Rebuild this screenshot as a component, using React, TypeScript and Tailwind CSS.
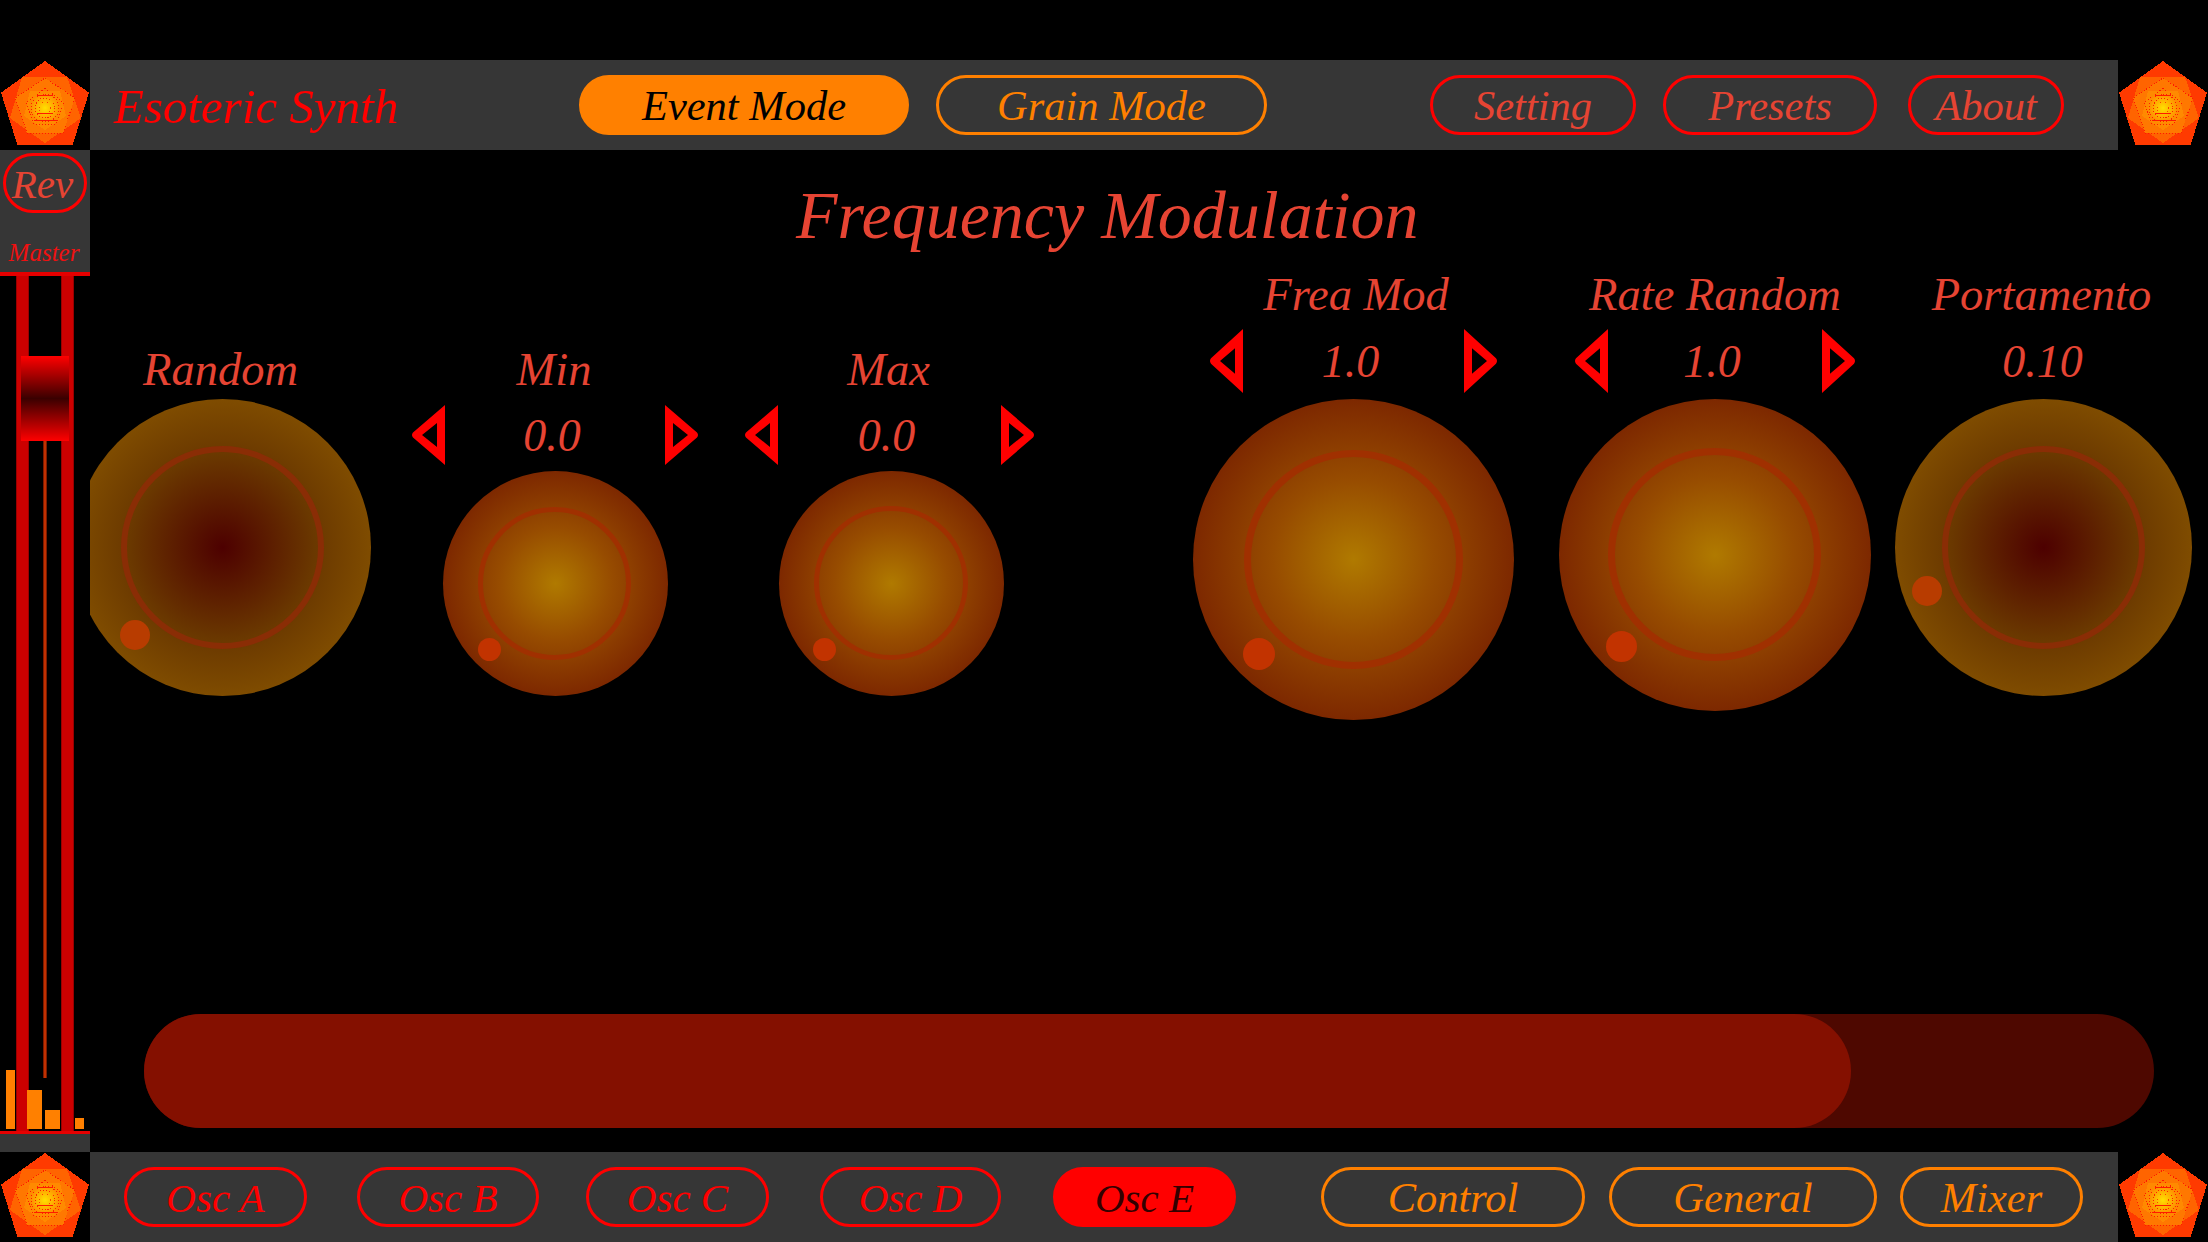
import { clsx } from "clsx";

function Logo() {
  return (
    <div className="w-[90px] h-[90px] shrink-0 bg-black">
      <svg viewBox="0 0 90 90" className="w-full h-full" shapeRendering="crispEdges">
        <defs>
          <radialGradient id="logoCore">
            <stop offset="0%" stopColor="#ffe000" />
            <stop offset="55%" stopColor="#ffb000" />
            <stop offset="100%" stopColor="#ff8a00" />
          </radialGradient>
        </defs>
        <polygon points="45,1 89,32.7 72.7,84.7 17.3,84.7 1,32.7" fill="#ff3a00" />
        <polygon points="22,17 67,17 81,58 45,83 10,58" fill="#ff6400" />
        <polygon points="45,18 75,38 63,73 27,73 15,38" fill="#ff7800" stroke="#ff1a00" strokeWidth="1" strokeDasharray="1 2" />
        <polygon points="30,31 60,31 66,56 45,70 24,56" fill="#ff8a00" />
        <polygon points="45,28 64,43 56,64 34,64 26,43" fill="none" stroke="#ff1a00" strokeWidth="1" strokeDasharray="1 2" />
        <circle cx="45" cy="48" r="15" fill="url(#logoCore)" />
        <circle cx="45" cy="48" r="14" fill="none" stroke="#ff2000" strokeWidth="1" strokeDasharray="1 2" />
        <circle cx="45" cy="48" r="10" fill="none" stroke="#ff2000" strokeWidth="1" strokeDasharray="1 2" />
        <circle cx="45" cy="48" r="6" fill="none" stroke="#ff4000" strokeWidth="1" strokeDasharray="1 2" />
        <rect x="37" y="35" width="16" height="1" fill="#ff1a00" />
        <rect x="37" y="53" width="16" height="1" fill="#ff1a00" />
        <rect x="34" y="60" width="23" height="1" fill="#ff1a00" />
      </svg>
    </div>
  );
}

type PillProps = {
  label: string;
  width: string;
  tone: "red" | "redSoft" | "orange" | "redOn" | "orangeOn";
  textSize?: string;
  className?: string;
};

const toneClass = {
  red: "border-[#ff0000] text-[#ff0000]",
  redSoft: "border-[#ff0000] text-[#e64433]",
  orange: "border-[#ff8000] text-[#ff8000]",
  redOn: "border-[#ff0000] bg-[#ff0000] text-[#330000]",
  orangeOn: "border-[#ff8000] bg-[#ff8000] text-black",
};

function Pill({ label, width, tone, textSize = "text-[42.5px]", className }: PillProps) {
  return (
    <button
      className={clsx(
        "h-[60px] shrink-0 pt-[2px] rounded-[30px] border-[3px] flex items-center justify-center leading-none",
        width,
        textSize,
        toneClass[tone],
        className,
      )}
    >
      {label}
    </button>
  );
}

function Arrow({ right, tall }: { right?: boolean; tall?: boolean }) {
  return (
    <svg
      viewBox="0 0 34 60"
      preserveAspectRatio="none"
      className={clsx("w-[34px] shrink-0", tall ? "h-[64px]" : "h-[60px]", right && "-scale-x-100")}
    >
      <path d="M34 0V60L2 32.5Q0 30 2 27.5ZM26 18L11 30L26 42Z" fill="#ff0000" fillRule="evenodd" />
    </svg>
  );
}

type KnobProps = {
  size: string;
  ring: string;
  dot: string;
  dark?: boolean;
  className?: string;
};

function Knob({ size, ring, dot, dark, className }: KnobProps) {
  return (
    <div
      className={clsx(
        "relative shrink-0 rounded-full",
        size,
        dark
          ? "bg-[radial-gradient(circle_closest-side,#4d0000_0%,#6a3800_62%,#7f4c00_100%)]"
          : "bg-[radial-gradient(circle_closest-side,#b07a00_0%,#974c00_50%,#7d2800_100%)]",
        className,
      )}
    >
      <div className={clsx("absolute rounded-full", dark ? "border-[#8a2d05]" : "border-[#a03000]", ring)} />
      <div className={clsx("absolute rounded-full", dark ? "bg-[#b83c00]" : "bg-[#c23300]", dot)} />
    </div>
  );
}

function Label({ text, className }: { text: string; className?: string }) {
  return (
    <div className={clsx("h-[60px] flex items-center justify-center text-[46.5px] leading-none text-[#e64433] whitespace-nowrap", className)}>
      {text}
    </div>
  );
}

function Value({ value, tall, pad }: { value: string; tall?: boolean; pad?: string }) {
  return (
    <div className={clsx("w-full flex items-center justify-between mt-[6px] mb-[6px]", tall ? "h-[64px]" : "h-[60px]", pad)}>
      <Arrow tall={tall} />
      <span className="mt-[2px] -ml-[6px] text-[46px] leading-none text-[#e64433]">{value}</span>
      <Arrow right tall={tall} />
    </div>
  );
}

function Fader() {
  return (
    <div className="relative flex-1 bg-black overflow-hidden">
      <div className="absolute left-[16px] top-0 bottom-0 w-[13px] bg-[#cc0000] border-x border-[#990000]" />
      <div className="absolute left-[61px] top-0 bottom-0 w-[13px] bg-[#cc0000] border-x border-[#990000]" />
      <div className="absolute left-[6px] bottom-[2px] w-[9px] h-[59px] bg-[#ff8000]" />
      <div className="absolute left-[27px] bottom-[2px] w-[15px] h-[39px] bg-[#ff8000]" />
      <div className="absolute left-[45px] bottom-[2px] w-[15px] h-[19px] bg-[#ff8000]" />
      <div className="absolute left-[75px] bottom-[2px] w-[9px] h-[11px] bg-[#ff8000]" />
      <div className="absolute left-[43px] top-[165px] h-[637px] w-[4px] bg-[#c03000] border-x border-[#7a1a00]" />
      <div className="absolute left-[21px] top-[80px] w-[48px] h-[85px] bg-[linear-gradient(#ff0000,#3a0000_50%,#ff0000)]" />
    </div>
  );
}

export default function App() {
  return (
    <div className="w-[2208px] h-[1242px] bg-black flex flex-col overflow-hidden italic font-['Liberation_Serif',serif]">
      <div className="h-[60px] shrink-0" />

      <div className="flex h-[90px] shrink-0">
        <Logo />
        <div className="flex-1 bg-[#363636] flex items-center">
          <div className="w-[489px] shrink-0 pl-[24px] pt-[3px] text-[49px] leading-none text-[#ff0000] whitespace-nowrap">Esoteric Synth</div>
          <Pill label="Event Mode" width="w-[330px]" tone="orangeOn" />
          <Pill label="Grain Mode" width="w-[331px]" tone="orange" className="ml-[27px]" />
          <Pill label="Setting" width="w-[206px]" tone="redSoft" className="ml-[163px]" />
          <Pill label="Presets" width="w-[214px]" tone="redSoft" className="ml-[27px]" />
          <Pill label="About" width="w-[156px]" tone="redSoft" className="ml-[31px]" />
        </div>
        <Logo />
      </div>

      <div className="flex flex-1 min-h-0">
        <div className="w-[90px] shrink-0 flex flex-col">
          <div className="h-[126px] shrink-0 bg-[#363636] border-b-[4px] border-[#e60000] flex flex-col items-center pt-[3px]">
            <Pill label="Rev" width="w-[84px]" tone="redSoft" textSize="text-[41px] pr-[5px]" />
            <div className="mt-[27px] pr-[2px] text-[25px] leading-none text-[#ee1111]">Master</div>
          </div>
          <Fader />
          <div className="h-[21px] shrink-0 bg-[#363636] border-t-[3px] border-[#e60000]" />
        </div>

        <div className="flex-1 min-w-0 flex flex-col overflow-hidden">
          <div className="h-[110px] shrink-0 pt-[20px] flex items-center pl-[706px] text-[68px] leading-none text-[#e64433] whitespace-nowrap">
            Frequency Modulation
          </div>

          <div className="flex items-start">
            <div className="w-[297px] shrink-0 -ml-[16px] mt-[79px] flex flex-col items-center">
              <Label text="Random" className="pt-[3px] pr-[4px]" />
              <Knob dark size="size-[297px]" ring="left-[47px] top-[47px] size-[203px] border-[6px]" dot="left-[46px] top-[221px] size-[30px]" />
            </div>

            <div className="w-[288px] shrink-0 ml-[40px] mt-[79px] flex flex-col items-center">
              <Label text="Min" className="pt-[3px] pr-[2px]" />
              <Value value="0.0" />
              <Knob size="size-[225px]" ring="left-[35px] top-[36px] size-[153px] border-[5px]" dot="left-[35px] top-[167px] size-[23px]" />
            </div>

            <div className="w-[291px] shrink-0 ml-[45px] mt-[79px] flex flex-col items-center">
              <Label text="Max" className="pt-[3px] pr-[2px]" />
              <Value value="0.0" />
              <Knob size="size-[225px]" className="ml-[4px]" ring="left-[35px] top-[35px] size-[154px] border-[5px]" dot="left-[34px] top-[167px] size-[23px]" />
            </div>

            <div className="w-[321px] shrink-0 ml-[158px] mt-[5px] flex flex-col items-center">
              <Label text="Frea Mod" className="mb-[-2px] pl-[5px]" />
              <Value value="1.0" tall pad="px-[16px]" />
              <Knob size="size-[321px]" ring="left-[51px] top-[51px] size-[219px] border-[7px]" dot="left-[50px] top-[239px] size-[32px]" />
            </div>

            <div className="w-[312px] shrink-0 ml-[45px] mt-[5px] flex flex-col items-center">
              <Label text="Rate Random" className="mb-[-2px]" />
              <Value value="1.0" tall pad="px-[15px]" />
              <Knob size="size-[312px]" ring="left-[49px] top-[49px] size-[213px] border-[7px]" dot="left-[47px] top-[232px] size-[31px]" />
            </div>

            <div className="w-[297px] shrink-0 ml-[24px] mt-[5px] flex flex-col items-center">
              <Label text="Portamento" className="mb-[-2px] pr-[4px]" />
              <div className="h-[64px] mt-[6px] mb-[6px] pt-[2px] pr-[2px] flex items-center text-[46px] leading-none text-[#e64433]">0.10</div>
              <Knob dark size="size-[297px]" ring="left-[47px] top-[47px] size-[203px] border-[6px]" dot="left-[17px] top-[177px] size-[30px]" />
            </div>
          </div>

          <div className="mt-auto mb-[24px] ml-[54px] mr-[54px] h-[114px] shrink-0 rounded-[57px] bg-[#4e0800]">
            <div className="h-full w-[1707px] rounded-[57px] bg-[#841000]" />
          </div>
        </div>
      </div>

      <div className="flex h-[90px] shrink-0">
        <Logo />
        <div className="flex-1 bg-[#363636] flex items-center pl-[34px]">
          <Pill label="Osc A" width="w-[183px]" tone="red" textSize="text-[41px]" />
          <Pill label="Osc B" width="w-[182px]" tone="red" textSize="text-[41px]" className="ml-[50px]" />
          <Pill label="Osc C" width="w-[183px]" tone="red" textSize="text-[41px]" className="ml-[47px]" />
          <Pill label="Osc D" width="w-[181px]" tone="red" textSize="text-[41px]" className="ml-[51px]" />
          <Pill label="Osc E" width="w-[183px]" tone="redOn" textSize="text-[41px]" className="ml-[52px]" />
          <Pill label="Control" width="w-[264px]" tone="orange" className="ml-[85px]" />
          <Pill label="General" width="w-[268px]" tone="orange" className="ml-[24px]" />
          <Pill label="Mixer" width="w-[183px]" tone="orange" className="ml-[23px]" />
        </div>
        <Logo />
      </div>
    </div>
  );
}
